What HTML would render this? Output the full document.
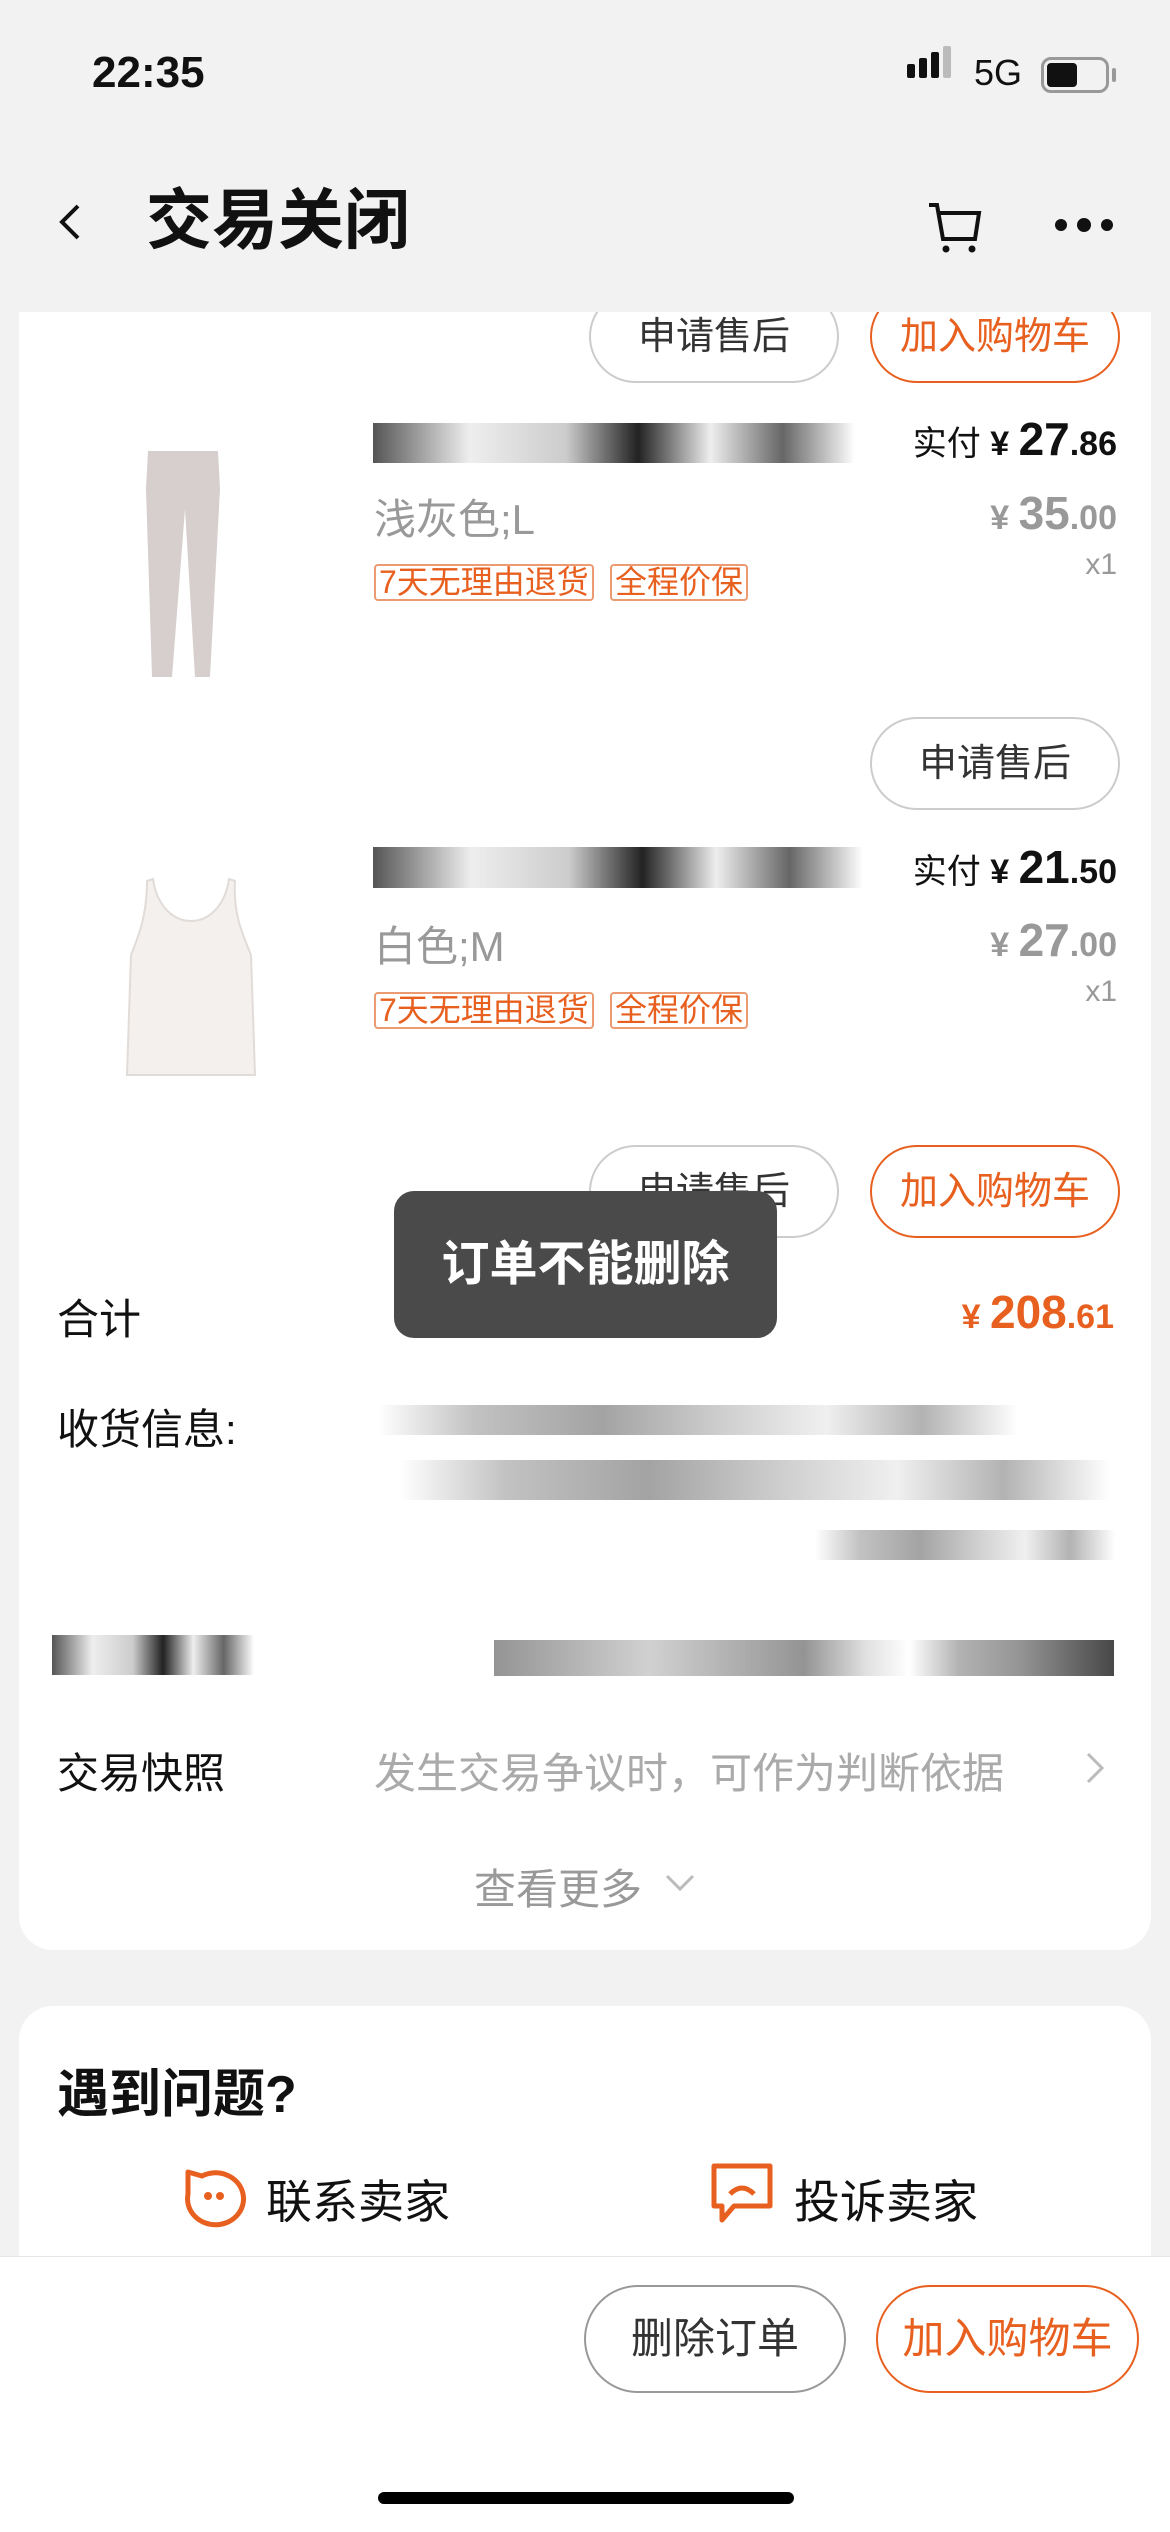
<!DOCTYPE html>
<html><head><meta charset="utf-8"><style>
*{margin:0;padding:0;box-sizing:border-box}
body{width:1170px;height:2532px;background:#f2f2f2;position:relative;overflow:hidden;font-family:"Liberation Sans","Noto Sans CJK SC",sans-serif;color:#111}
.a{position:absolute;white-space:nowrap}
.btn{position:absolute;border:2px solid #ccc;border-radius:60px;text-align:center;font-size:38px;color:#333;background:#fff}
.obtn{border-color:#e8601f;color:#e8601f}
.tag{position:absolute;border:2px solid #eb9a72;color:#e8601f;font-size:32px;line-height:33px;border-radius:4px;padding:0 3px}
.gr{color:#999}
.blur{position:absolute;background:linear-gradient(90deg,#555 0,#eee 20%,#ccc 40%,#222 55%,#eee 70%,#666 85%,#fff 100%)}
.bl2{position:absolute;background:linear-gradient(90deg,#fff 0,#bbb 15%,#999 35%,#ccc 55%,#eee 70%,#aaa 85%,#fff 100%);opacity:.9}
</style></head><body>
<div class="a" style="left:92px;top:48px;font-size:44px;font-weight:bold">22:35</div>
<div class="a" style="left:907px;top:64px;width:8px;height:14px;background:#111;border-radius:2px"></div>
<div class="a" style="left:919px;top:58px;width:8px;height:20px;background:#111;border-radius:2px"></div>
<div class="a" style="left:931px;top:52px;width:8px;height:26px;background:#111;border-radius:2px"></div>
<div class="a" style="left:943px;top:46px;width:8px;height:32px;background:#bbb;border-radius:2px"></div>
<div class="a" style="left:974px;top:52px;font-size:36px">5G</div>
<div class="a" style="left:1041px;top:57px;width:68px;height:36px;border:3px solid #999;border-radius:10px"></div>
<div class="a" style="left:1047px;top:63px;width:30px;height:24px;background:#111;border-radius:4px"></div>
<div class="a" style="left:1112px;top:68px;width:4px;height:14px;background:#999;border-radius:2px"></div>
<svg class="a" style="left:50px;top:200px" width="40" height="44"><path d="M28 6 L12 22 L28 38" fill="none" stroke="#111" stroke-width="4"/></svg>
<div class="a" style="left:146px;top:180px;font-size:66px;font-weight:bold;line-height:80px">交易关闭</div>
<svg class="a" style="left:925px;top:195px" width="60" height="60"><path d="M4 10 H12 L18 44 H50 L54 18 H15" fill="none" stroke="#111" stroke-width="4"/><circle cx="21" cy="54" r="3.5" fill="#111"/><circle cx="47" cy="54" r="3.5" fill="#111"/></svg>
<div class="a" style="left:1055px;top:219px;width:12px;height:12px;border-radius:6px;background:#111"></div>
<div class="a" style="left:1077px;top:218px;width:14px;height:14px;border-radius:7px;background:#111"></div>
<div class="a" style="left:1101px;top:219px;width:12px;height:12px;border-radius:6px;background:#111"></div>

<div class="a" style="left:19px;top:312px;width:1132px;height:1638px;background:#fff;border-radius:0 0 34px 34px"></div>
<div class="btn" style="left:589px;top:290px;width:250px;height:93px;line-height:90px">申请售后</div>
<div class="btn obtn" style="left:870px;top:290px;width:250px;height:93px;line-height:90px">加入购物车</div>
<div style="position:absolute;left:19px;top:280px;width:1132px;height:32px;background:#f2f2f2"></div>

<svg class="a" style="left:140px;top:449px" width="90" height="232"><path d="M8 2 H78 L80 40 L70 228 H55 L45 60 L32 228 H12 L6 40 Z" fill="#d6cfcd"/></svg>
<div class="blur" style="left:373px;top:423px;width:482px;height:40px"></div>
<div class="a gr" style="left:374px;top:486px;font-size:42px">浅灰色;L</div>
<div class="tag" style="left:374px;top:564px">7天无理由退货</div>
<div class="tag" style="left:610px;top:564px">全程价保</div>
<div class="a" style="right:53px;top:412px;font-size:34px">实付 <b>¥</b> <b style="font-size:46px">27</b><b>.86</b></div>
<div class="a gr" style="right:53px;top:486px;font-size:34px"><b>¥ </b><b style="font-size:46px">35</b><b>.00</b></div>
<div class="a gr" style="right:53px;top:548px;font-size:30px">x1</div>

<div class="btn" style="left:870px;top:717px;width:250px;height:93px;line-height:90px">申请售后</div>
<svg class="a" style="left:121px;top:875px" width="140" height="205"><path d="M32 4 C40 60 100 60 108 4 L114 6 C112 40 122 60 130 80 L134 200 H6 L10 80 C18 60 26 40 26 6 Z" fill="#f4f0ee" stroke="#e2dcd8" stroke-width="2"/></svg>
<div class="blur" style="left:373px;top:847px;width:490px;height:41px"></div>
<div class="a gr" style="left:374px;top:913px;font-size:42px">白色;M</div>
<div class="tag" style="left:374px;top:992px">7天无理由退货</div>
<div class="tag" style="left:610px;top:992px">全程价保</div>
<div class="a" style="right:53px;top:840px;font-size:34px">实付 <b>¥</b> <b style="font-size:46px">21</b><b>.50</b></div>
<div class="a gr" style="right:53px;top:913px;font-size:34px"><b>¥ </b><b style="font-size:46px">27</b><b>.00</b></div>
<div class="a gr" style="right:53px;top:975px;font-size:30px">x1</div>

<div class="btn" style="left:589px;top:1145px;width:250px;height:93px;line-height:90px">申请售后</div>
<div class="btn obtn" style="left:870px;top:1145px;width:250px;height:93px;line-height:90px">加入购物车</div>

<div class="a" style="left:57px;top:1286px;font-size:42px">合计</div>
<div class="a" style="right:56px;top:1285px;color:#e8601f;font-weight:bold;font-size:34px">¥ <span style="font-size:46px">208</span>.61</div>
<div class="a" style="left:57px;top:1396px;font-size:42px">收货信息:</div>
<div class="bl2" style="left:378px;top:1405px;width:640px;height:30px"></div>
<div class="bl2" style="left:400px;top:1460px;width:710px;height:40px"></div>
<div class="bl2" style="left:815px;top:1530px;width:300px;height:30px"></div>
<div class="blur" style="left:52px;top:1635px;width:202px;height:40px"></div>
<div class="bl2" style="left:494px;top:1640px;width:620px;height:36px;background:linear-gradient(90deg,#888 0,#ccc 25%,#888 50%,#ddd 60%,#fff 67%,#aaa 75%,#888 85%,#333 100%)"></div>
<div class="a" style="left:57px;top:1740px;font-size:42px">交易快照</div>
<div class="a" style="left:374px;top:1740px;font-size:42px;color:#aaa">发生交易争议时，可作为判断依据</div>
<svg class="a" style="left:1080px;top:1748px" width="30" height="40"><path d="M8 6 L22 20 L8 34" fill="none" stroke="#bbb" stroke-width="3"/></svg>
<div class="a" style="left:474px;top:1856px;font-size:42px;color:#999">查看更多</div>
<svg class="a" style="left:664px;top:1872px" width="32" height="24"><path d="M3 4 L16 17 L29 4" fill="none" stroke="#bbb" stroke-width="3"/></svg>

<div class="a" style="left:19px;top:2006px;width:1132px;height:300px;background:#fff;border-radius:34px"></div>
<div class="a" style="left:57px;top:2052px;font-size:52px;font-weight:bold">遇到问题?</div>
<svg class="a" style="left:178px;top:2162px" width="68" height="66"><path d="M10 10 L24 14 A28 26 0 1 1 10 32 Z" fill="none" stroke="#e8601f" stroke-width="5" stroke-linejoin="round"/><circle cx="30" cy="34" r="4" fill="#e8601f"/><circle cx="42" cy="34" r="4" fill="#e8601f"/></svg>
<div class="a" style="left:266px;top:2166px;font-size:46px">联系卖家</div>
<svg class="a" style="left:708px;top:2160px" width="68" height="66"><path d="M6 6 H62 V46 H26 L14 60 V46 H6 Z" fill="none" stroke="#e8601f" stroke-width="5" stroke-linejoin="round"/><path d="M22 34 Q34 22 46 34" fill="none" stroke="#e8601f" stroke-width="5"/></svg>
<div class="a" style="left:794px;top:2166px;font-size:46px">投诉卖家</div>

<div class="a" style="left:0;top:2256px;width:1170px;height:276px;background:#fff;border-top:1px solid #e6e6e6"></div>
<div class="btn" style="left:584px;top:2285px;width:262px;height:108px;line-height:104px;font-size:42px;border-color:#999">删除订单</div>
<div class="btn obtn" style="left:876px;top:2285px;width:263px;height:108px;line-height:104px;font-size:42px">加入购物车</div>
<div class="a" style="left:378px;top:2492px;width:416px;height:12px;border-radius:6px;background:#000"></div>

<div class="a" style="left:394px;top:1191px;width:383px;height:147px;background:#4a4a4a;border-radius:20px;color:#fff;font-size:48px;font-weight:bold;text-align:center;line-height:147px">订单不能删除</div>
</body></html>
